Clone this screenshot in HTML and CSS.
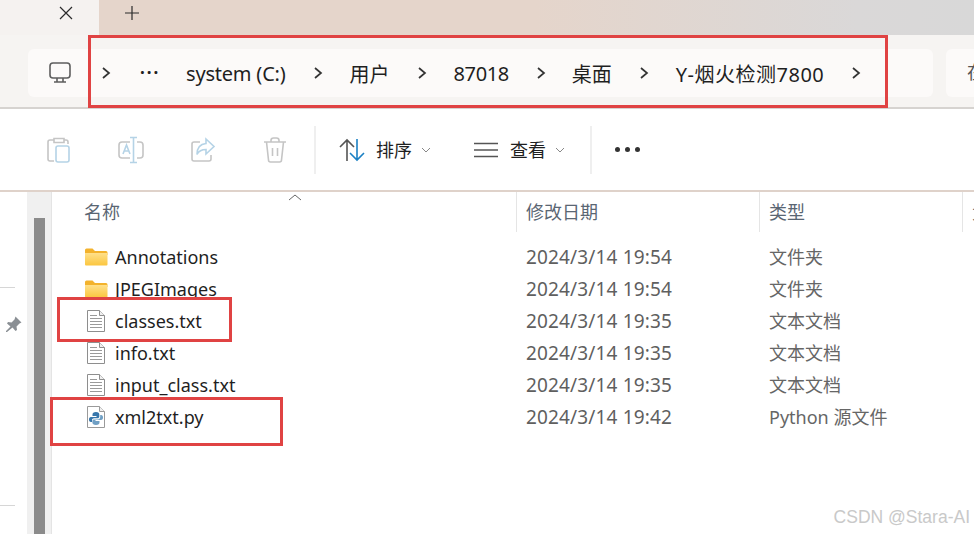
FILE: index.html
```html
<!DOCTYPE html>
<html lang="zh-CN">
  <head>
    <meta charset="UTF-8" />
    <title>Y-烟火检测7800</title>
    <link rel="stylesheet" href="styles.css">
  </head>
  <body>
    <div class="window">
      <div class="titlebar">
        <div class="tab">
          <svg class="tab-close" width="16" height="16" viewBox="0 0 16 16"><path d="M2 2l12 12M14 2L2 14" /></svg>
        </div>
        <svg class="tab-add" width="16" height="16" viewBox="0 0 16 16"><path d="M8 1v14M1 8h14" /></svg>
      </div>

      <div class="addressbar">
        <div class="address">
          <svg class="pc-icon" width="24" height="24" viewBox="0 0 24 24"><rect x="2" y="2" width="20" height="15" rx="3" /><path d="M9 17v3.5M15 17v3.5M6 21h12" /></svg>
          <svg class="chevron" width="10" height="14" viewBox="0 0 10 14"><path d="M2 2l6 5-6 5" /></svg>
          <span class="crumb-more">···</span>
          <span class="crumb-drive">system (C:)</span>
          <svg class="chevron" width="10" height="14" viewBox="0 0 10 14"><path d="M2 2l6 5-6 5" /></svg>
          <span>用户</span>
          <svg class="chevron" width="10" height="14" viewBox="0 0 10 14"><path d="M2 2l6 5-6 5" /></svg>
          <span class="crumb-user">87018</span>
          <svg class="chevron" width="10" height="14" viewBox="0 0 10 14"><path d="M2 2l6 5-6 5" /></svg>
          <span>桌面</span>
          <svg class="chevron" width="10" height="14" viewBox="0 0 10 14"><path d="M2 2l6 5-6 5" /></svg>
          <span class="crumb-last">Y-烟火检测7800</span>
          <svg class="chevron" width="10" height="14" viewBox="0 0 10 14"><path d="M2 2l6 5-6 5" /></svg>
        </div>
        <div class="search">在</div>
      </div>

      <div class="toolbar">
        <div class="tool-group">
          <div class="tool">
            <svg width="26" height="28" viewBox="0 0 26 28"><path class="off" d="M8 4H4a2 2 0 0 0-2 2v17a2 2 0 0 0 2 2h4M18 4h2a2 2 0 0 1 2 2v2M8 2.500h10v4H8z" /><rect class="off-blue" x="10" y="10" width="13" height="16" rx="2" /></svg>
          </div>
          <div class="tool">
            <svg width="26" height="28" viewBox="0 0 26 28"><path class="off" d="M12 6H4a3 3 0 0 0-3 3v10a3 3 0 0 0 3 3h8M19 6h3a3 3 0 0 1 3 3v10a3 3 0 0 1-3 3h-3" /><path class="off-blue" d="M5 18l3.500-9L12 18M6.200 15h4.600M12 1.500h7M12 26.500h7M15.500 1.500v25" /></svg>
          </div>
          <div class="tool">
            <svg width="26" height="28" viewBox="0 0 26 28"><path class="off" d="M10 6H4a2 2 0 0 0-2 2v15a2 2 0 0 0 2 2h15a2 2 0 0 0 2-2v-4" /><path class="off-blue" d="M16 3l8 7.500-8 7.500v-4.500c-4 0-7 1-9 5 0-6 3-10.500 9-11z" /></svg>
          </div>
          <div class="tool">
            <svg width="26" height="28" viewBox="0 0 26 28"><path class="off" d="M2 6h22M9 6V4.500A2.500 2.500 0 0 1 11.500 2h3A2.500 2.500 0 0 1 17 4.500V6M4.500 6l2 18a2 2 0 0 0 2 2h9a2 2 0 0 0 2-2l2-18M10.500 12v8M15.500 12v8" /></svg>
          </div>
        </div>
        <div class="tool-sep"></div>
        <div class="tool-text sort">
          <svg width="26" height="26" viewBox="0 0 26 26"><path class="sort-up" d="M8 24V3M1 10l7-7 7 7" /><path class="sort-down" d="M18 2v21M11 16l7 7 7-7" /></svg>
          <span>排序</span>
          <svg class="caret" width="10" height="6" viewBox="0 0 10 6"><path d="M1 1l4 4 4-4" /></svg>
        </div>
        <div class="tool-text view">
          <svg width="24" height="16" viewBox="0 0 24 16"><path d="M0 1.500h24M0 8h24M0 14.500h24" /></svg>
          <span>查看</span>
          <svg class="caret" width="10" height="6" viewBox="0 0 10 6"><path d="M1 1l4 4 4-4" /></svg>
        </div>
        <div class="tool-sep"></div>
        <div class="tool-more"><i></i><i></i><i></i></div>
      </div>

      <div class="main">
        <div class="nav">
          <div class="nav-line"></div>
          <svg class="pin" width="18" height="18" viewBox="0 0 18 18"><path d="M10.500 1.500l6 6-2 1-3 3 .5 3.500-1.500 1-3-3.500L2 17l-1 0 0-1 4.500-4.500L2 8.500l1-1.500 3.500.5 3-3z" /></svg>
          <div class="nav-line nav-line-low"></div>
        </div>
        <div class="scrollbar"><div class="thumb"></div></div>

        <div class="files">
          <div class="row head">
            <div class="cell name-head">名称
              <svg class="sort-mark" width="14" height="8" viewBox="0 0 14 8"><path d="M1 7l6-5 6 5" /></svg>
            </div>
            <div class="cell">修改日期</div>
            <div class="cell">类型</div>
            <div class="cell">大小</div>
          </div>

          <div class="row item">
            <div class="cell name"><svg class="icon" width="24" height="20" viewBox="0 0 24 20"><use href="#folder" /></svg>Annotations</div>
            <div class="cell date">2024/3/14 19:54</div>
            <div class="cell type">文件夹</div>
          </div>
          <div class="row item">
            <div class="cell name"><svg class="icon" width="24" height="20" viewBox="0 0 24 20"><use href="#folder" /></svg>JPEGImages</div>
            <div class="cell date">2024/3/14 19:54</div>
            <div class="cell type">文件夹</div>
          </div>
          <div class="row item">
            <div class="cell name"><svg class="icon" width="24" height="24" viewBox="0 0 24 24"><use href="#textfile" /></svg>classes.txt</div>
            <div class="cell date">2024/3/14 19:35</div>
            <div class="cell type">文本文档</div>
          </div>
          <div class="row item">
            <div class="cell name"><svg class="icon" width="24" height="24" viewBox="0 0 24 24"><use href="#textfile" /></svg>info.txt</div>
            <div class="cell date">2024/3/14 19:35</div>
            <div class="cell type">文本文档</div>
          </div>
          <div class="row item">
            <div class="cell name"><svg class="icon" width="24" height="24" viewBox="0 0 24 24"><use href="#textfile" /></svg>input_class.txt</div>
            <div class="cell date">2024/3/14 19:35</div>
            <div class="cell type">文本文档</div>
          </div>
          <div class="row item">
            <div class="cell name"><svg class="icon" width="24" height="24" viewBox="0 0 24 24"><use href="#pyfile" /></svg>xml2txt.py</div>
            <div class="cell date">2024/3/14 19:42</div>
            <div class="cell type">Python 源文件</div>
          </div>
        </div>
      </div>

      <!-- 标注用的红框 -->
      <div class="mark mark-address"></div>
      <div class="mark mark-classes"></div>
      <div class="mark mark-py"></div>
      <div class="watermark">CSDN @Stara-AI</div>
    </div>

    <svg class="defs" width="0" height="0">
      <defs>
        <linearGradient id="folder-front" x1="0" y1="0" x2="0" y2="1">
          <stop offset="0" stop-color="#ffe08a" />
          <stop offset="1" stop-color="#fbc63f" />
        </linearGradient>
        <g id="folder">
          <path d="M1 3a1.500 1.500 0 0 1 1.500-1.500h6l2.500 2.500h11a1.500 1.500 0 0 1 1.500 1.500V8H1z" fill="#f3b22c" />
          <path d="M1 6h22.500v11.500a1 1 0 0 1-1 1H2a1 1 0 0 1-1-1z" fill="url(#folder-front)" />
        </g>
        <g id="textfile">
          <path d="M3.500 1.500h12l5 5v16h-17z" fill="#fff" stroke="#8e8e8e" />
          <path d="M15.500 1.500v5h5" fill="#f0f0f0" stroke="#8e8e8e" />
          <path d="M6 6.500h7M6 9.500h12M6 12.500h12M6 15.500h12M6 18.500h12" stroke="#9a9a9a" />
        </g>
        <g id="pyfile">
          <path d="M3.500 1.500h12l5 5v16h-17z" fill="#fff" stroke="#9a9a9a" />
          <path d="M15.500 1.500v5h5" fill="#f0f0f0" stroke="#9a9a9a" />
          <path d="M12 7c-2.500 0-3.500 1-3.500 2.500V11h4v1H7c-1.500 0-2 1.200-2 2.500S5.500 17 7 17h1v-2c0-1 1-1.800 2-1.800h3.500c1 0 1.800-.8 1.800-1.800V9.500C15.300 8 14.500 7 12 7z" fill="#3776ab" />
          <path d="M12 20c2.500 0 3.500-1 3.500-2.500V16h-4v-1H17c1.500 0 2-1.200 2-2.500S18.500 10 17 10h-.8v2c0 1.500-1 2.400-2.500 2.400H10c-1 0-1.600.7-1.600 1.600v1.500C8.400 19 9.500 20 12 20z" fill="#6f9fc4" />
        </g>
      </defs>
    </svg>
  </body>
</html>
```

FILE: styles.css
```css
* {
  box-sizing: border-box;
}
html,
body {
  margin: 0;
  height: 100%;
  overflow: hidden;
}
body {
  font-family: 'Noto Sans', 'Noto Sans CJK SC', sans-serif;
  color: #1f1f1f;
  background-color: #fff;
}
svg {
  display: block;
  flex: none;
  fill: none;
}
.defs {
  position: absolute;
}
.window {
  position: relative;
  width: 974px;
  height: 534px;
  overflow: hidden;
}

/* 标题栏 */
.titlebar {
  display: flex;
  align-items: center;
  height: 35px;
  background: linear-gradient(90deg, #e5d5cb 0%, #e5d5cb 55%, #dad8d8 88%, #d8d8d8 100%);
}
.tab {
  display: flex;
  align-items: center;
  justify-content: flex-end;
  width: 99px;
  height: 100%;
  padding: 0 25px 9px 0;
  background-color: #f5f2f0;
}
.tab-close path,
.tab-add path {
  stroke: #2b2b2b;
  stroke-width: 1.2;
}
.tab-add {
  margin: 0 0 9px 25px;
}

/* 地址栏 */
.addressbar {
  display: flex;
  gap: 13px;
  height: 74px;
  padding: 14px 0 0 28px;
  background-color: #f6f4f2;
  border-bottom: 2px solid #d6d3d0;
}
.address {
  display: flex;
  flex: none;
  align-items: center;
  gap: 27px;
  width: 905px;
  height: 48px;
  padding-left: 20px;
  font-size: 20px;
  background-color: #fcfaf9;
  border-radius: 6px;
}
.pc-icon {
  margin-right: 2px;
}
.pc-icon rect,
.pc-icon path {
  stroke: #5e5e5e;
  stroke-width: 1.6;
}
.chevron path {
  stroke: #333;
  stroke-width: 1.7;
}
.crumb-more {
  position: relative;
  top: -1px;
  flex: none;
  width: 22px;
  margin-left: 2px;
  font-size: 17px;
  font-weight: 700;
  line-height: 1;
  letter-spacing: 2px;
}
.crumb-drive {
  margin-left: -3px;
  letter-spacing: -.2px;
}
.crumb-user {
  letter-spacing: -.4px;
}
.crumb-user + .chevron + span {
  margin-left: -1px;
}
.crumb-last {
  letter-spacing: .5px;
}
.search {
  flex: 1;
  height: 48px;
  padding-left: 21px;
  font-size: 18px;
  line-height: 46px;
  color: #555;
  background-color: #fcfaf9;
  border-radius: 6px 0 0 6px;
}

/* 工具栏 */
.toolbar {
  display: flex;
  align-items: center;
  height: 83px;
  padding-left: 23px;
  font-size: 18px;
  background-color: #fff;
  border-bottom: 2px solid #dfd2ca;
}
.tool-group {
  display: flex;
}
.tool {
  display: flex;
  justify-content: center;
  width: 72px;
}
.off {
  stroke: #c5c5c5;
  stroke-width: 1.6;
}
.off-blue {
  stroke: #b5d3e6;
  stroke-width: 1.6;
}
.tool-sep {
  width: 2px;
  height: 48px;
  margin-left: 3px;
  background-color: #efefef;
}
.tool-text {
  display: flex;
  align-items: center;
}
.tool-text span {
  position: relative;
  top: -1px;
  margin-left: 11px;
}
.sort {
  margin-left: 23px;
}
.sort-up {
  stroke: #555;
  stroke-width: 1.6;
}
.sort-down {
  stroke: #1b80c4;
  stroke-width: 1.6;
}
.view {
  margin-left: 43px;
}
.view > svg:first-child path {
  stroke: #555;
  stroke-width: 1.5;
}
.view span {
  margin-left: 12px;
}
.caret {
  margin-left: 9px;
}
.caret path {
  stroke: #888;
  stroke-width: 1;
}
.view + .tool-sep {
  margin-left: 25px;
}
.tool-more {
  display: flex;
  gap: 5px;
  margin-left: 23px;
}
.tool-more i {
  width: 5px;
  height: 5px;
  border-radius: 50%;
  background-color: #333;
}

/* 左侧导航 + 滚动条 */
.main {
  display: flex;
  height: 342px;
}
.nav {
  flex: none;
  width: 27px;
  padding-top: 95px;
}
.nav-line {
  width: 15px;
  height: 1px;
  background-color: #d6d6d6;
}
.nav-line-low {
  margin-top: 172px;
}
.pin {
  margin: 27px 0 0 5px;
}
.pin path {
  fill: #8a8f94;
}
.scrollbar {
  flex: none;
  width: 25px;
  padding: 26px 7px 0;
  background-color: #f0f0f0;
  border-right: 1px solid #e4e4e4;
}
.thumb {
  width: 11px;
  height: 100%;
  background-color: #8b8b8b;
}

/* 文件列表 */
.files {
  flex: 1;
  min-width: 0;
  font-size: 18px;
}
.row {
  display: grid;
  grid-template-columns: 464px 243px 203px 1fr;
  white-space: nowrap;
}
.head {
  height: 40px;
  margin-bottom: 9px;
  color: #5a6673;
}
.head .cell {
  position: relative;
  padding-left: 9px;
  line-height: 40px;
  border-left: 1px solid #e5e5e5;
}
.head .name-head {
  padding-left: 32px;
  border-left: 0;
}
.sort-mark {
  position: absolute;
  top: 1px;
  left: 236px;
}
.sort-mark path {
  stroke: #666;
}
.item {
  align-items: center;
  height: 32px;
}
.item .cell {
  padding-left: 10px;
}
.item .name {
  display: flex;
  align-items: center;
  gap: 7px;
  padding-left: 32px;
}
.date {
  font-size: 19px;
  letter-spacing: .15px;
  color: #5f5f5f;
}
.type {
  position: relative;
  top: -1px;
  color: #666;
}

/* 红框 */
.mark {
  position: absolute;
  border: 3px solid #e04343;
}
.mark-address {
  top: 35px;
  left: 88px;
  width: 800px;
  height: 73px;
}
.mark-classes {
  top: 297px;
  left: 57px;
  width: 175px;
  height: 45px;
}
.mark-py {
  top: 397px;
  left: 50px;
  width: 233px;
  height: 49px;
}
.watermark {
  position: absolute;
  right: 4px;
  bottom: 6px;
  font-family: 'Liberation Sans', sans-serif;
  font-size: 17.5px;
  color: #c9c9c9;
}
```
